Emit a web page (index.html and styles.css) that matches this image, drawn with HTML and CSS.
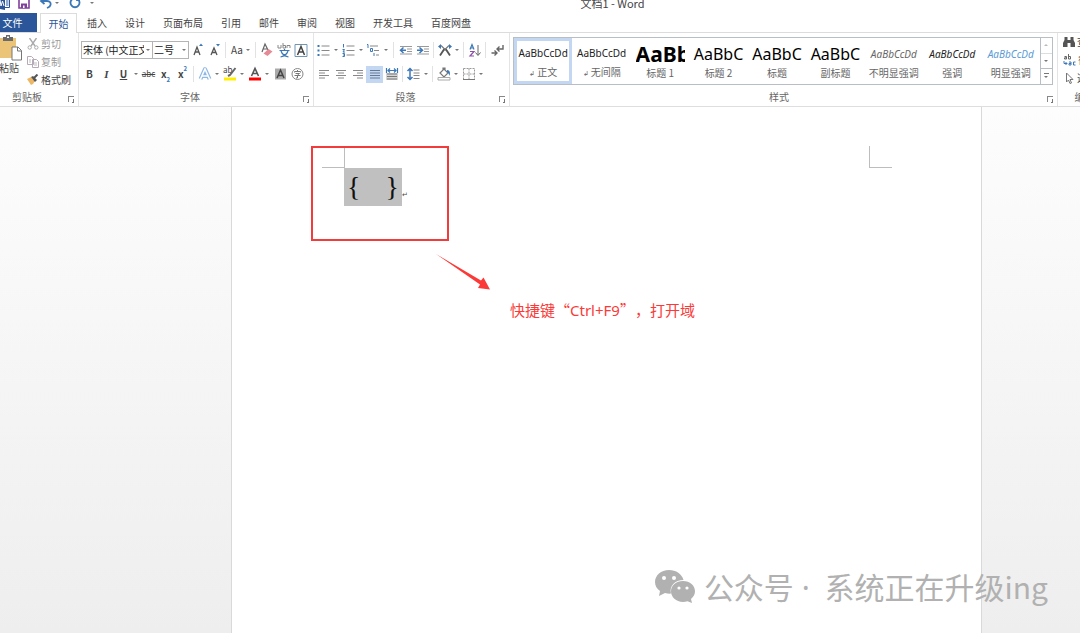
FILE: index.html
```html
<!DOCTYPE html>
<html lang="zh-CN">
<head>
<meta charset="utf-8">
<title>文档1 - Word</title>
<link rel="stylesheet" href="styles.css">
</head>
<body>
<header class="titlebar">
  <div class="quick">
    <button class="q-logo" aria-label="Word"><svg width="10" height="14" viewBox="0 0 10 14"><path d="M0 1l5-1v14l-5-1z" fill="#2b579a"/><path d="M5 2.500h4.500v9H5M6 5h2.500M6 7h2.500M6 9h2.500" fill="none" stroke="#2b579a"/><path d="M0 4l1 6 1.500-5L4 10" fill="none" stroke="#fff"/></svg></button>
    <button class="q-save" aria-label="保存"><svg width="12" height="12" viewBox="0 0 12 12"><path d="M1 1h10v10H1z" fill="#fff" stroke="#80409c" stroke-width="1.600"/><path d="M3 6.500h6V11H3z" fill="#80409c"/><path d="M5 8.500h1.500V11H5z" fill="#fff"/></svg></button>
    <button class="q-undo" aria-label="撤消"><svg width="14" height="12" viewBox="0 0 14 12"><path d="M2 4h6c3 0 4 2 3.500 4S9 10.500 8 11M5.500 1L2 4l3.500 3" fill="none" stroke="#3c78b8" stroke-width="1.800"/></svg></button>
    <button class="caret" aria-label="撤消选项"></button>
    <button class="q-redo" aria-label="重复"><svg width="12" height="12" viewBox="0 0 12 12"><path d="M8.500 2a4.500 4.500 0 1 1-5 0M8 0v3h3" fill="none" stroke="#3c78b8" stroke-width="1.800"/></svg></button>
    <button class="caret over" aria-label="自定义快速访问工具栏"></button>
  </div>
  <h1 class="title">文档1 - Word</h1>
</header>

<nav class="tabs">
  <button class="file">文件</button>
  <button class="tab active">开始</button>
  <button class="tab">插入</button>
  <button class="tab">设计</button>
  <button class="tab">页面布局</button>
  <button class="tab">引用</button>
  <button class="tab">邮件</button>
  <button class="tab">审阅</button>
  <button class="tab">视图</button>
  <button class="tab">开发工具</button>
  <button class="tab">百度网盘</button>
</nav>

<section class="ribbon">
  <div class="group clipboard">
    <div class="clip-body">
      <button class="paste">
        <svg width="23" height="26" viewBox="0 0 23 26"><path d="M1 3h16v20H1z" fill="#ecc478"/><path d="M4 2h3V0h4v2h3v4H4z" fill="#6a6a6a"/><path d="M8 1.500h2v1.500H8z" fill="#fff"/><path d="M13 12h6l3.500 3.500V25H13z" fill="#fff" stroke="#777"/><path d="M18.500 12v4h4" fill="none" stroke="#777"/></svg>
        <span>粘贴</span><i class="tri"></i>
      </button>
      <div class="clip-list">
        <button class="off"><svg width="12" height="12" viewBox="0 0 12 12"><path d="M2.500 0L8 8M9.500 0L4 8" stroke="#aaa" stroke-width="1.400"/><circle cx="2.700" cy="9.500" r="1.700" fill="none" stroke="#aaa"/><circle cx="9.300" cy="9.500" r="1.700" fill="none" stroke="#aaa"/></svg>剪切</button>
        <button class="off"><svg width="12" height="12" viewBox="0 0 12 12"><path d="M.5.5h4l2 2v6h-6zM5.500 3.500h4l2 2v6h-6z" fill="#fff" stroke="#b5aab5"/><path d="M2 4h2M2 6h2M7 7h3M7 9h3" stroke="#bbb"/></svg>复制</button>
        <button><svg width="12" height="12" viewBox="0 0 12 12"><path d="M0 5l4-2 4 4-2 3-2 1z" fill="#ecb868"/><path d="M4 3l2-1 4 4-2 2z" fill="#555"/><path d="M7 4l3.500-3.500" stroke="#555" stroke-width="2"/></svg>格式刷</button>
      </div>
    </div>
    <footer><span>剪贴板</span><button class="launch" aria-label="剪贴板设置"></button></footer>
  </div>

  <div class="group font">
    <div class="row">
      <label class="combo name"><select aria-label="字体"><option>宋体 (中文正文)</option></select><i class="tri"></i></label>
      <label class="combo size"><select aria-label="字号"><option>二号</option></select><i class="tri"></i></label>
      <button class="ic" aria-label="增大字号"><svg width="16" height="16" viewBox="0 0 16 16"><path d="M4 13l3-8 3 8M5 10h4" fill="none" stroke="#555" stroke-width="1.300"/><path d="M9 4l2-2.500L13 4z" fill="#3c78b8"/></svg></button>
      <button class="ic" aria-label="减小字号"><svg width="16" height="16" viewBox="0 0 16 16"><path d="M4 13l3-7 3 7M5 10.500h4" fill="none" stroke="#555" stroke-width="1.300"/><path d="M9 2l2 2.500L13 2z" fill="#3c78b8"/></svg></button>
      <i class="sep tight"></i>
      <button class="aa" aria-label="更改大小写">Aa<i class="tri"></i></button>
      <i class="sep tight"></i>
      <button class="ic" aria-label="清除所有格式"><svg width="16" height="16" viewBox="0 0 16 16"><path d="M3 10l3-8 3 6M4 7h4" fill="none" stroke="#666" stroke-width="1.200"/><path d="M4.500 11.500l5-4.500 4 2.500-5 4.500z" fill="#e58a97"/></svg></button>
      <button class="ic" aria-label="拼音指南"><svg width="16" height="16" viewBox="0 0 16 16"><path d="M2 3v3h3V3M7 1v5h2.500V3.500H7M11 6V3.500h3V6" fill="none" stroke="#888"/><path d="M3.500 8.500h10M8.500 7v1.500M5 9c1 3 3 5 7.500 6M12 9c-1 3-3 5-7.500 6" fill="none" stroke="#3c78b8" stroke-width="1.200"/></svg></button>
      <button class="ic" aria-label="字符边框"><svg width="16" height="16" viewBox="0 0 16 16"><path d="M2 2.500h12v12H2z" fill="#fff" stroke="#7195b5"/><path d="M4.500 13L8 4.500l3.500 8.500M5.500 10h5" fill="none" stroke="#444" stroke-width="1.500"/></svg></button>
    </div>
    <div class="row">
      <button class="ic b" aria-label="加粗">B</button>
      <button class="ic i" aria-label="倾斜">I</button>
      <button class="ic u" aria-label="下划线">U</button>
      <button class="caret" aria-label="下划线选项"></button>
      <button class="ic s" aria-label="删除线">abc</button>
      <button class="ic x" aria-label="下标">x<sub>2</sub></button>
      <button class="ic x" aria-label="上标">x<sup>2</sup></button>
      <i class="sep tight"></i>
      <button class="ic" aria-label="文本效果"><svg width="16" height="16" viewBox="0 0 16 16"><path d="M3.500 13L8 3l4.500 10M5 10h6" fill="none" stroke="#8db8e6" stroke-width="4" stroke-linejoin="round"/><path d="M3.500 13L8 3l4.500 10M5 10h6" fill="none" stroke="#fff" stroke-width="1.600"/></svg></button>
      <button class="caret" aria-label="文本效果选项"></button>
      <button class="ic" aria-label="突出显示"><svg width="16" height="16" viewBox="0 0 16 16"><text x="1" y="7" font-size="8" fill="#444">ab</text><path d="M13.500 2L8 9l-2 1" fill="none" stroke="#666" stroke-width="2"/><path d="M2 11.500h12v3H2z" fill="#ffee00"/></svg></button>
      <button class="caret" aria-label="突出显示颜色"></button>
      <button class="ic" aria-label="字体颜色"><svg width="16" height="16" viewBox="0 0 16 16"><path d="M4.500 10L8 2.500l3.500 7.500M6 7.500h4" fill="none" stroke="#555" stroke-width="1.600"/><path d="M2 11.500h12v3H2z" fill="#f00"/></svg></button>
      <button class="caret" aria-label="字体颜色选项"></button>
      <button class="ic" aria-label="字符底纹"><svg width="16" height="16" viewBox="0 0 16 16"><path d="M3 2.500h11v11H3z" fill="#aaa"/><path d="M5 12l3.500-8 3.500 8M6 9.500h5" fill="none" stroke="#444" stroke-width="1.500"/></svg></button>
      <button class="ic" aria-label="带圈字符"><svg width="16" height="16" viewBox="0 0 16 16"><circle cx="8.500" cy="8" r="5.500" fill="#fff" stroke="#888"/><path d="M5.500 6.500v-1h6v1M8.500 4v1.500M6.500 7.500h4l-2 1.500v3H7M5.500 9.500h6" fill="none" stroke="#777"/></svg></button>
    </div>
    <footer><span>字体</span><button class="launch" aria-label="字体设置"></button></footer>
  </div>

  <div class="group para">
    <div class="row">
      <button class="ic" aria-label="项目符号"><svg width="16" height="16" viewBox="0 0 16 16"><path d="M1.500 4h2M1.500 8.500h2M1.500 13h2" stroke="#3c78b8" stroke-width="2"/><path d="M5.500 4h8M5.500 8.500h8M5.500 13h8" stroke="#888"/></svg></button>
      <button class="caret" aria-label="项目符号选项"></button>
      <button class="ic" aria-label="编号"><svg width="16" height="16" viewBox="0 0 16 16"><path d="M2.500 2v3.500M1.500 7.500h2L2 10h2M1.500 11.500h2v3h-2M2 13h1.500" fill="none" stroke="#3c78b8"/><path d="M5.500 4h8M5.500 8.500h8M5.500 13h8" stroke="#888"/></svg></button>
      <button class="caret" aria-label="编号选项"></button>
      <button class="ic" aria-label="多级列表"><svg width="16" height="16" viewBox="0 0 16 16"><path d="M1 2.500h1V6M4.500 6.500h2v3h-2zM8 11v3" fill="none" stroke="#3c78b8"/><path d="M4 4h8M8 8.500h5M10 13h3" stroke="#888"/></svg></button>
      <button class="caret" aria-label="多级列表选项"></button>
      <i class="sep"></i>
      <button class="ic" aria-label="减少缩进"><svg width="16" height="16" viewBox="0 0 16 16"><path d="M2 4.500h12M9 7h5M9 9.500h5M2 12h12" stroke="#999"/><path d="M8 8.200H3M5.500 5.500L2.500 8.200l3 2.800" fill="none" stroke="#3c78b8" stroke-width="1.500"/></svg></button>
      <button class="ic" aria-label="增加缩进"><svg width="16" height="16" viewBox="0 0 16 16"><path d="M2 4.500h12M9 7h5M9 9.500h5M2 12h12" stroke="#999"/><path d="M2 8.200h5M4.500 5.500l3 2.700-3 2.800" fill="none" stroke="#3c78b8" stroke-width="1.500"/></svg></button>
      <i class="sep tight"></i>
      <button class="ic" aria-label="中文版式"><svg width="16" height="16" viewBox="0 0 16 16"><path d="M3 13.500l4-6h2l4 6" fill="none" stroke="#555" stroke-width="1.800"/><path d="M4 3.500l4 4 4-4" fill="none" stroke="#777" stroke-width="1.200"/><path d="M1 4.500L4 2v5zM15 4.500L12 2v5z" fill="#3c78b8"/></svg></button>
      <button class="caret" aria-label="中文版式选项"></button>
      <i class="sep tight"></i>
      <button class="ic" aria-label="排序"><svg width="16" height="16" viewBox="0 0 16 16"><path d="M3 7.500l2-5 2 5M4 6h2.500" fill="none" stroke="#3c78b8" stroke-width="1.200"/><path d="M3 9.500h4l-4 4.500h4" fill="none" stroke="#9050a8" stroke-width="1.200"/><path d="M11 3v10M8.500 10.500L11 13.500l2.500-3" fill="none" stroke="#666"/></svg></button>
      <i class="sep tight"></i>
      <button class="ic" aria-label="显示编辑标记"><svg width="16" height="16" viewBox="0 0 16 16"><path d="M14 3v4H8M10.500 4.500L8 7l2.500 2.500M2.500 11h5M5.500 8.500L8 11l-2.500 2.500" fill="none" stroke="#666" stroke-width="1.400"/></svg></button>
    </div>
    <div class="row">
      <button class="ic" aria-label="左对齐"><svg width="16" height="16" viewBox="0 0 16 16"><path d="M3 4.500h10M3 7h6M3 9.500h10M3 12h6" stroke="#888"/></svg></button>
      <button class="ic" aria-label="居中"><svg width="16" height="16" viewBox="0 0 16 16"><path d="M3 4.500h10M5 7h6M3 9.500h10M5 12h6" stroke="#888"/></svg></button>
      <button class="ic" aria-label="右对齐"><svg width="16" height="16" viewBox="0 0 16 16"><path d="M3 4.500h10M7 7h6M3 9.500h10M7 12h6" stroke="#888"/></svg></button>
      <button class="ic on" aria-label="两端对齐"><svg width="16" height="16" viewBox="0 0 16 16"><path d="M3 4.500h10M3 7h10M3 9.500h10M3 12h10" stroke="#667a96"/></svg></button>
      <button class="ic" aria-label="分散对齐"><svg width="16" height="16" viewBox="0 0 16 16"><path d="M2 7h12v7H2z" fill="#d5d5d5"/><path d="M3 8h10M3 10.500h10M3 13h10" stroke="#777"/><path d="M2.500 2v5M13.500 2v5M4 4.500h8M6 2.500l-2 2 2 2M10 2.500l2 2-2 2" fill="none" stroke="#3c78b8" stroke-width="1.200"/></svg></button>
      <i class="sep tight"></i>
      <button class="ic" aria-label="行距"><svg width="16" height="16" viewBox="0 0 16 16"><path d="M4 3v10M1.500 5L4 2.500 6.500 5M1.500 11L4 13.500 6.500 11" fill="none" stroke="#3c78b8" stroke-width="1.500"/><path d="M7.500 4h6M7.500 7h6M7.500 9.500h6M7.500 12.500h6" stroke="#888"/></svg></button>
      <button class="caret" aria-label="行距选项"></button>
      <i class="sep tight"></i>
      <button class="ic" aria-label="底纹"><svg width="16" height="16" viewBox="0 0 16 16"><path d="M4 7l4-4 4 4-4 4zM7 5V2h2v3" fill="#fff" stroke="#777" stroke-width="1.200"/><path d="M11 4c3 0 3.500 3 2.500 6C13 8 12.500 7 11 6z" fill="#3c78b8"/><path d="M2 11.500h12v2.500H2z" fill="#fff" stroke="#aaa"/></svg></button>
      <button class="caret" aria-label="底纹选项"></button>
      <button class="ic" aria-label="边框"><svg width="16" height="16" viewBox="0 0 16 16"><path d="M2.500 2.500h11v11h-11zM8 2.500v11M2.500 8h11" fill="none" stroke="#999" stroke-dasharray="2 1"/><path d="M2 13.500h12" stroke="#777"/></svg></button>
      <button class="caret" aria-label="边框选项"></button>
    </div>
    <footer><span>段落</span><button class="launch" aria-label="段落设置"></button></footer>
  </div>

  <div class="group styles">
    <div class="gallery">
      <button class="style sel"><span class="demo">AaBbCcDd</span><span class="cap"><i>↲</i> 正文</span></button>
      <button class="style"><span class="demo">AaBbCcDd</span><span class="cap"><i>↲</i> 无间隔</span></button>
      <button class="style"><span class="demo h1">AaBb</span><span class="cap">标题 1</span></button>
      <button class="style"><span class="demo h2">AaBbC</span><span class="cap">标题 2</span></button>
      <button class="style"><span class="demo h2">AaBbC</span><span class="cap">标题</span></button>
      <button class="style"><span class="demo h2">AaBbC</span><span class="cap">副标题</span></button>
      <button class="style"><span class="demo em soft">AaBbCcDd</span><span class="cap">不明显强调</span></button>
      <button class="style"><span class="demo em">AaBbCcDd</span><span class="cap">强调</span></button>
      <button class="style"><span class="demo em blue">AaBbCcDd</span><span class="cap">明显强调</span></button>
      <div class="scroll">
        <button class="dim" aria-label="上一行"><i class="tri up"></i></button>
        <button aria-label="下一行"><i class="tri"></i></button>
        <button aria-label="其他"><i class="tri more"></i></button>
      </div>
    </div>
    <footer><span>样式</span><button class="launch" aria-label="样式窗口"></button></footer>
  </div>

  <div class="group editing">
    <div class="clip-list">
      <button><svg width="12" height="12" viewBox="0 0 12 12"><path d="M1.500 1h3v3h3V1h3v3l1.500 3v4H7.500V7h-3v4H0V7l1.500-3z" fill="#555"/></svg>查找</button>
      <button><svg width="13" height="12" viewBox="0 0 13 12"><path d="M1.500 2.500h2V5h-2V3.800h2M5.500 0v5h2V2.500h-2" fill="none" stroke="#666"/><path d="M6 8h2v3H6V9.500h2M12.500 8h-2v3h2M1 7v2.500h3M2.500 8L4 9.500 2.500 11" fill="none" stroke="#3c78b8"/></svg>替换</button>
      <button><svg width="12" height="12" viewBox="0 0 12 12"><path d="M3.500 1v9l2-2 1.500 3.500L8.500 11 7 7.500h3z" fill="#fff" stroke="#777"/></svg>选择</button>
    </div>
    <footer><span>编辑</span></footer>
  </div>
</section>

<main class="workspace">
  <article class="page">
    <div class="text-area">
      <i class="corner left"></i><i class="corner right"></i>
      <p class="line"><span class="field"><span>{</span><span>}</span></span><span class="mark">↵</span></p>
    </div>
    <div class="frame"></div>
    <svg class="arrow" width="56" height="38" viewBox="0 0 56 38"><path d="M1 1L46 27.500l2.500-3L55 36.500l-12-1.500 2-3.500z" fill="#fb3a38"/></svg>
    <p class="note">快捷键“<span class="latin">Ctrl+F9</span>”，打开域</p>
  </article>
  <div class="watermark">
    <svg width="42" height="36" viewBox="0 0 42 36"><path d="M15 1C7 1 1 6.500 1 13c0 4 2 7 5 9l-1 5 6-3c2 .5 4 .8 6 .6C15 17 21 11 29.500 11 28 5 22 1 15 1z" fill="#b1b1b1"/><path d="M29 12c-7 0-12 4.500-12 10.300S22 33 29 33c1.500 0 3-.3 4.500-.8L38 34l-1-4c2.500-2 4-4.500 4-7.700C41 16.500 36 12 29 12z" fill="#b1b1b1"/><g fill="#fff"><circle cx="10" cy="9" r="2"/><circle cx="20" cy="9" r="2"/><circle cx="25" cy="19" r="1.600"/><circle cx="33" cy="19" r="1.600"/></g></svg>
    <p>公众号<span class="dot"> · </span>系统正在升级ing</p>
  </div>
</main>
</body>
</html>
```
FILE: styles.css
```css
* { box-sizing: border-box; }

body {
  margin: 0;
  min-height: 100vh;
  display: flex;
  flex-direction: column;
  overflow: hidden;
  background: #fff;
  color: #444;
  font: 10px/14px "Noto Sans CJK SC", "Noto Sans", sans-serif;
}

button {
  display: flex;
  align-items: center;
  justify-content: center;
  flex: none;
  margin: 0;
  padding: 0;
  border: 0;
  background: none;
  color: inherit;
  font: inherit;
  white-space: nowrap;
}

svg { display: block; flex: none; }
i { font-style: normal; }

.tri, .caret::before {
  flex: none;
  border: 2px solid transparent;
  border-top-color: #777;
  border-bottom: 0;
}
.caret::before { content: ""; }
.caret { width: 8px; height: 16px; }

/* title bar */
.titlebar { height: 13px; display: flex; overflow: hidden; }
.quick { width: 145px; height: 18px; margin-top: -6px; display: flex; align-items: center; }
.q-save { margin-left: 8px; }
.q-undo { margin-left: 9px; }
.q-redo { margin-left: 8px; }
.quick .over { margin-left: 7px; }
.title { flex: 1; margin: -6px 0 0; font-size: 11px; line-height: 18px; font-weight: 400; text-align: center; }

/* tabs */
.tabs { display: flex; height: 20px; border-bottom: 1px solid #dcdcdc; }
.file { width: 37px; padding-right: 12px; background: #2b579a; color: #fff; }
.tab { padding: 0 9px; height: 19px; }
.tab.active { width: 37px; height: 20px; margin: 0 1px 0 3px; border: 1px solid #dcdcdc; border-bottom: 0; background: #fff; color: #2b579a; }

/* ribbon */
.ribbon { display: flex; height: 74px; border-bottom: 1px solid #dedede; overflow: hidden; }
.group { flex: none; display: flex; flex-direction: column; padding-top: 5px; border-right: 1px solid #e4e4e4; }
.group footer { display: flex; align-items: center; height: 18px; margin-top: auto; color: #666; }
.group footer span { flex: 1; text-align: center; }
.launch { position: relative; width: 6px; height: 6px; margin: 4px 4px 0 2px; border: solid #888; border-width: 1px 0 0 1px; }
.launch::after { content: ""; width: 3px; height: 3px; margin: 3px 0 0 3px; border: solid #777; border-width: 0 1px 1px 0; }
.row { display: flex; align-items: center; height: 24px; }
.sep { flex: none; width: 1px; height: 16px; margin: 0 3px; background: #e2e2e2; }
.tight { margin: 0 2px; }
.ic { width: 17px; height: 17px; }
.on { background: #c3d6f2; }

.clipboard { width: 91px; margin-left: -12px; }
.clip-body { display: flex; height: 48px; margin-top: -3px; padding-left: 11px; }
.paste { flex-direction: column; width: 23px; height: 50px; margin-right: 5px; align-items: flex-start; justify-content: flex-start; }
.paste .tri { margin: 3px 0 0 9px; }
.clip-list { display: flex; flex-direction: column; }
.clip-list button { height: 18px; gap: 2px; justify-content: flex-start; }
.off { color: #999; }

.font { width: 235px; }
.font .row { padding-left: 2px; }
.combo { display: flex; align-items: center; height: 18px; padding-right: 2px; border: 1px solid #b4b4b4; }
.combo select { flex: 1; min-width: 0; margin-right: 2px; padding: 0 0 0 1px; border: 0; background: none; color: #222; font: inherit; appearance: none; overflow: hidden; text-overflow: clip; }
.name { width: 72px; }
.size { width: 36px; border-left: 0; }
.aa { width: 25px; gap: 3px; }
.b { font-weight: 700; }
.i { font: italic 700 11px "Liberation Serif", serif; }
.u { font-weight: 700; text-decoration: underline; }
.s { text-decoration: line-through; font-size: 8px; }
.x { font-weight: 700; }
.x sub, .x sup { font-size: 6px; line-height: 6px; color: #3c78b8; }
.x sub { align-self: flex-end; }
.x sup { align-self: flex-start; }

.para { width: 196px; }
.para .row { padding-left: 1px; }

.styles { flex: 1; min-width: 0; padding: 4px 0 0 3px; }
.gallery { display: flex; height: 48px; margin-right: 4px; border: 1px solid #b8bfc4; }
.style { flex: 1; min-width: 0; flex-direction: column; overflow: hidden; }
.sel { box-shadow: inset 0 0 0 3px #c3d6f2; }
.demo { height: 23px; font: 10px/23px "Noto Sans", sans-serif; color: #222; }
.h1 { width: 49px; overflow: hidden; font-size: 21px; font-weight: 700; color: #000; }
.h2 { font-size: 16px; color: #000; }
.em { font-style: italic; }
.soft { color: #666; }
.blue { color: #5b9bd5; }
.cap { color: #666; }
.cap i { font-size: 7px; }
.scroll { width: 12px; display: flex; flex-direction: column; border-left: 1px solid #b8bfc4; }
.scroll button { flex: 1; border-bottom: 1px solid #b8bfc4; }
.scroll button:last-child { border-bottom: 0; }
.up { transform: rotate(180deg); }
.dim { opacity: .5; }
.more { position: relative; }
.more::before { content: ""; position: absolute; left: -2px; top: -5px; width: 5px; height: 1px; background: #777; }

.editing { width: 60px; margin-right: -38px; padding: 0 0 0 5px; border: 0; }
.editing footer { padding-right: 12px; }

/* document */
.workspace {
  position: relative;
  flex: 1;
  display: grid;
  grid-template-columns: 231fr 751fr 98fr;
  background: linear-gradient(#fdfdfd, #eeeeee);
}
.page { position: relative; grid-column: 2; padding: 61px 90px 0 112px; border: solid #d9d9d9; border-width: 0 1px; background: #fff; }
.text-area { position: relative; }
.corner { position: absolute; top: -22px; width: 23px; height: 22px; border: 0 solid #bdbdbd; border-bottom-width: 1px; }
.corner.left { left: -22px; border-right-width: 1px; }
.corner.right { right: -1px; border-left-width: 1px; }
.line { display: flex; margin: 0; }
.field { display: flex; justify-content: space-between; width: 58px; height: 38px; padding: 0 3px; background: #c0c0c0; color: #111; font: 28px/38px "Liberation Serif", serif; }
.mark { align-self: flex-end; margin-bottom: 5px; font-size: 7px; line-height: 14px; }
.frame { position: absolute; left: 79px; top: 39px; width: 138px; height: 95px; border: 2px solid #f23c3c; }
.arrow { position: absolute; left: 203px; top: 146px; }
.note { position: absolute; left: 278px; top: 192px; margin: 0; color: #fb3a38; font-size: 15px; line-height: 22px; white-space: nowrap; text-spacing-trim: space-all; }
.latin { font-family: "Noto Sans", sans-serif; }
.watermark { position: absolute; right: 32px; bottom: 24px; display: flex; align-items: center; gap: 8px; color: #b1b1b1; font-size: 30px; line-height: 42px; white-space: nowrap; }
.watermark p { margin: 0; }
.dot { margin-right: 7px; font-family: "Noto Sans", sans-serif; }
```
